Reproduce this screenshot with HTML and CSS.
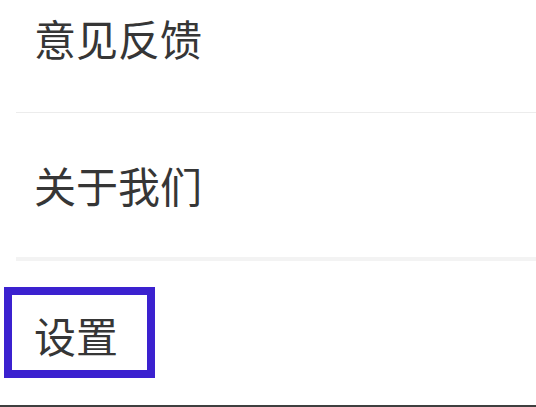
FILE: index.html
```html
<!DOCTYPE html>
<html lang="zh">
<head>
<meta charset="utf-8">
<link rel="stylesheet" href="styles.css">
</head>
<body>
<div class="page">
  <ul class="menu">
    <li class="item item-first"><span class="label">意见反馈</span></li>
    <li class="item item-mid"><span class="label">关于我们</span></li>
    <li class="item item-last"><span class="label">设置</span><span class="focus"></span></li>
  </ul>
  <div class="bottom-bar"></div>
</div>
</body>
</html>
```

FILE: styles.css
```css
html, body {
  margin: 0;
  padding: 0;
  background: #ffffff;
}
.page {
  width: 536px;
  height: 407px;
  overflow: hidden;
  display: flex;
  flex-direction: column;
}
.menu {
  list-style: none;
  margin: -36px 0 0 0;
  padding: 0;
}
.item {
  margin-left: 16px;
  padding-left: 18px;
  display: flex;
  align-items: center;
  box-sizing: border-box;
}
.label {
  font-family: "Noto Sans CJK SC", "Noto Sans", sans-serif;
  font-size: 42px;
  line-height: 1;
  color: #363636;
}
.item-first {
  height: 149px;
  border-bottom: 1px solid #ececec;
}
.item-mid {
  height: 148px;
  border-bottom: 4px solid #f3f3f3;
}
.item-last {
  height: 144px;
  padding-top: 4px;
  position: relative;
}
.focus {
  position: absolute;
  left: -12px;
  top: 26px;
  width: 151px;
  height: 91px;
  box-sizing: border-box;
  border: 8px solid #3b21cf;
}
.bottom-bar {
  height: 3px;
  background: #3f3f3f;
}
```
